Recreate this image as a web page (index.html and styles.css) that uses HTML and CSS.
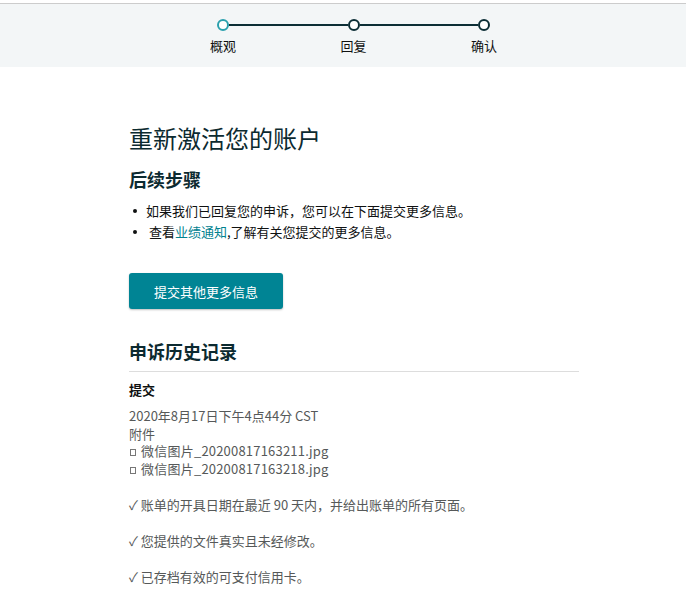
FILE: index.html
```html
<!DOCTYPE html>
<html lang="zh-CN">
<head>
<meta charset="utf-8">
<title>重新激活您的账户</title>
<link rel="stylesheet" href="styles.css">
</head>
<body>
<header class="band">
  <div class="stepper">
    <div class="track">
      <span class="dot dot-active"></span>
      <span class="seg"></span>
      <span class="dot"></span>
      <span class="seg"></span>
      <span class="dot"></span>
    </div>
    <div class="labels">
      <span>概观</span>
      <span>回复</span>
      <span>确认</span>
    </div>
  </div>
</header>
<main class="content">
  <h1 class="title">重新激活您的账户</h1>
  <h2 class="subhead">后续步骤</h2>
  <ul class="steps">
    <li>如果我们已回复您的申诉，您可以在下面提交更多信息。</li>
    <li>&nbsp;查看<a class="link" href="#">业绩通知</a>,了解有关您提交的更多信息。</li>
  </ul>
  <button class="btn" type="button">提交其他更多信息</button>
  <h2 class="subhead history-head">申诉历史记录</h2>
  <hr class="rule">
  <section class="entry">
    <h3 class="entry-title">提交</h3>
    <div class="meta">
      <div>2020年8月17日下午4点44分 CST</div>
      <div>附件</div>
      <div class="file-row"><span class="file"></span> 微信图片_20200817163211.jpg</div>
      <div class="file-row"><span class="file"></span> 微信图片_20200817163218.jpg</div>
    </div>
    <p class="check">✓ 账单的开具日期在最近 90 天内，并给出账单的所有页面。</p>
    <p class="check">✓ 您提供的文件真实且未经修改。</p>
    <p class="check">✓ 已存档有效的可支付信用卡。</p>
  </section>
</main>
</body>
</html>
```

FILE: styles.css
```css
* { box-sizing: border-box; }

body {
  margin: 0;
  background: #ffffff;
  font-family: "Noto Sans CJK SC", "Noto Sans", sans-serif;
  color: #0f1111;
}

.band {
  margin-top: 3px;
  border-top: 1px solid #cccccc;
  background: #f3f6f7;
  padding: 15px 0 12px;
}

.stepper {
  margin-left: 210px;
  width: 287px;
}

.track {
  display: flex;
  align-items: center;
  padding: 0 7px 0 7px;
}

.dot {
  width: 12px;
  height: 12px;
  border-radius: 50%;
  border: 2px solid #0c2e35;
  background: #ffffff;
  flex: none;
}

.dot-active {
  border-color: #2aa0ad;
}

.seg {
  flex: 1;
  height: 2px;
  background: #0c2e35;
}

.labels {
  display: flex;
  justify-content: space-between;
  margin-top: 6px;
  font-size: 13px;
  line-height: 18px;
  color: #0f1111;
}

.content {
  margin-left: 129px;
  width: 450px;
}

.title {
  margin: 55px 0 0;
  font-size: 24px;
  line-height: 32px;
  font-weight: 400;
  color: #0c2a30;
}

.subhead {
  margin: 13px 0 0;
  font-size: 18px;
  line-height: 24px;
  font-weight: 700;
  color: #0c2a30;
}

.steps {
  margin: 9px 0 0;
  padding-left: 17px;
  list-style: none;
  font-size: 13px;
  line-height: 21px;
}

.steps li {
  position: relative;
}

.steps li::before {
  content: "";
  position: absolute;
  left: -13px;
  top: 9px;
  width: 4px;
  height: 4px;
  border-radius: 50%;
  background: #0f1111;
}

.link {
  color: #00818f;
  text-decoration: none;
}

.btn {
  display: block;
  margin-top: 31px;
  width: 154px;
  height: 36px;
  border: 0;
  border-radius: 3px;
  background: #008494;
  color: #ffffff;
  font-family: inherit;
  font-size: 13px;
  box-shadow: 0 1px 2px rgba(0, 0, 0, 0.25);
}

.history-head {
  margin-top: 30px;
}

.rule {
  margin: 8px 0 0;
  border: 0;
  border-top: 1px solid #dddddd;
}

.entry-title {
  margin: 9px 0 0;
  font-size: 13px;
  line-height: 18px;
  font-weight: 700;
  color: #0f1111;
}

.meta {
  margin-top: 8px;
  font-size: 13px;
  line-height: 17.5px;
  color: #565959;
}

.file-row {
  letter-spacing: 0.2px;
}

.file {
  display: inline-block;
  width: 6px;
  height: 7px;
  margin-left: 1px;
  margin-right: 2px;
  border: 1px solid #777777;
  vertical-align: 0;
}

.check {
  margin: 18.5px 0 0;
  font-size: 13px;
  line-height: 17.5px;
  color: #565959;
}
```
